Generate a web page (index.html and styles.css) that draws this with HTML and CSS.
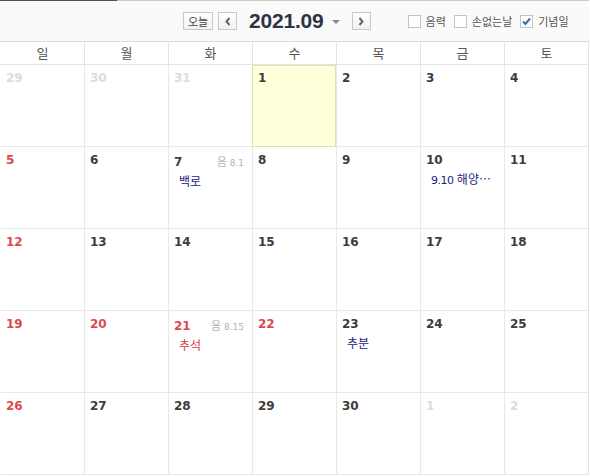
FILE: index.html
```html
<!DOCTYPE html>
<html lang="ko">
<head>
  <meta charset="UTF-8">
  <link rel="stylesheet" href="styles.css">
  <title>2021.09</title>
</head>
<body>
  <div class="calendar">
    <div class="topline"></div>
    <div class="toolbar">
      <div class="nav">
        <button class="btn btn-today">오늘</button>
        <button class="btn btn-arrow">
          <svg width="8" height="9" viewBox="0 0 8 9"><path d="M5.5 1 L2.5 4.5 L5.5 8" fill="none" stroke="#666" stroke-width="2"/></svg>
        </button>
        <div class="title">2021.09</div>
        <span class="caret"></span>
        <button class="btn btn-arrow">
          <svg width="8" height="9" viewBox="0 0 8 9"><path d="M2.5 1 L5.5 4.5 L2.5 8" fill="none" stroke="#666" stroke-width="2"/></svg>
        </button>
      </div>
      <div class="options">
        <label class="opt"><span class="box"></span>음력</label>
        <label class="opt"><span class="box"></span>손없는날</label>
        <label class="opt"><span class="box">
          <svg width="11" height="11" viewBox="0 0 11 11"><path d="M2 5.5 L4.5 8 L9 2.5" fill="none" stroke="#3b6ea8" stroke-width="2"/></svg>
        </span>기념일</label>
      </div>
    </div>

    <div class="weekdays">
      <div>일</div><div>월</div><div>화</div><div>수</div><div>목</div><div>금</div><div>토</div>
    </div>

    <div class="grid">
      <div class="cell"><div class="head"><span class="num other">29</span></div></div>
      <div class="cell"><div class="head"><span class="num other">30</span></div></div>
      <div class="cell"><div class="head"><span class="num other">31</span></div></div>
      <div class="cell today"><div class="head"><span class="num">1</span></div></div>
      <div class="cell"><div class="head"><span class="num">2</span></div></div>
      <div class="cell"><div class="head"><span class="num">3</span></div></div>
      <div class="cell"><div class="head"><span class="num">4</span></div></div>

      <div class="cell"><div class="head"><span class="num red">5</span></div></div>
      <div class="cell"><div class="head"><span class="num">6</span></div></div>
      <div class="cell">
        <div class="head"><span class="num">7</span><span class="lunar"><em>음</em> 8.1</span></div>
        <div class="event">백로</div>
      </div>
      <div class="cell"><div class="head"><span class="num">8</span></div></div>
      <div class="cell"><div class="head"><span class="num">9</span></div></div>
      <div class="cell">
        <div class="head"><span class="num">10</span></div>
        <div class="event"><span class="digits">9.10</span> 해양…</div>
      </div>
      <div class="cell"><div class="head"><span class="num">11</span></div></div>

      <div class="cell"><div class="head"><span class="num red">12</span></div></div>
      <div class="cell"><div class="head"><span class="num">13</span></div></div>
      <div class="cell"><div class="head"><span class="num">14</span></div></div>
      <div class="cell"><div class="head"><span class="num">15</span></div></div>
      <div class="cell"><div class="head"><span class="num">16</span></div></div>
      <div class="cell"><div class="head"><span class="num">17</span></div></div>
      <div class="cell"><div class="head"><span class="num">18</span></div></div>

      <div class="cell"><div class="head"><span class="num red">19</span></div></div>
      <div class="cell"><div class="head"><span class="num red">20</span></div></div>
      <div class="cell">
        <div class="head"><span class="num red">21</span><span class="lunar"><em>음</em> 8.15</span></div>
        <div class="event holiday">추석</div>
      </div>
      <div class="cell"><div class="head"><span class="num red">22</span></div></div>
      <div class="cell">
        <div class="head"><span class="num">23</span></div>
        <div class="event">추분</div>
      </div>
      <div class="cell"><div class="head"><span class="num">24</span></div></div>
      <div class="cell"><div class="head"><span class="num">25</span></div></div>

      <div class="cell"><div class="head"><span class="num red">26</span></div></div>
      <div class="cell"><div class="head"><span class="num">27</span></div></div>
      <div class="cell"><div class="head"><span class="num">28</span></div></div>
      <div class="cell"><div class="head"><span class="num">29</span></div></div>
      <div class="cell"><div class="head"><span class="num">30</span></div></div>
      <div class="cell"><div class="head"><span class="num other">1</span></div></div>
      <div class="cell"><div class="head"><span class="num other">2</span></div></div>
    </div>
  </div>
</body>
</html>
```

FILE: styles.css
```css
body {
    margin: 0;
    background: #fff;
    font-family: "Noto Sans CJK KR", "DejaVu Sans", sans-serif;
    color: #333;
}

.calendar {
    width: 589px;
}

.topline {
    height: 1px;
    background: linear-gradient(to right, #4b5057 117px, #c9c9c9 117px);
}

.toolbar {
    height: 40px;
    background: #fafafa;
    border-bottom: 1px solid #dcdcdc;
    display: flex;
    align-items: center;
}

.nav {
    display: flex;
    align-items: center;
    padding-left: 183px;
}

.btn {
    height: 18px;
    margin: 0;
    padding: 0;
    border: 1px solid #c8c8c8;
    background: linear-gradient(#fff, #f1f1f1);
    font-family: "Noto Sans CJK KR", sans-serif;
    font-size: 11px;
    line-height: 16px;
    color: #444;
    display: flex;
    align-items: center;
    justify-content: center;
}

.btn-today {
    width: 30px;
    margin-right: 5px;
}

.btn-arrow {
    width: 19px;
}

.title {
    margin-left: 12px;
    font-family: "Liberation Sans", Arial, sans-serif;
    font-weight: bold;
    font-size: 21px;
    color: #2e3346;
    letter-spacing: -0.2px;
}

.caret {
    width: 0;
    height: 0;
    margin: 1px 12px 0 8px;
    border-left: 4px solid transparent;
    border-right: 4px solid transparent;
    border-top: 4px solid #888;
}

.options {
    display: flex;
    align-items: center;
    margin-left: 37px;
}

.opt {
    display: flex;
    align-items: center;
    font-size: 11px;
    color: #555;
    margin-right: 8px;
}

.box {
    width: 11px;
    height: 11px;
    border: 1px solid #c4c4c4;
    background: #fff;
    margin-right: 5px;
    display: flex;
    align-items: center;
    justify-content: center;
}

.weekdays {
    display: grid;
    grid-template-columns: repeat(7, 84px);
    height: 22px;
    border-bottom: 1px solid #e3e3e3;
    border-right: 1px solid #e3e3e3;
}

.weekdays div {
    border-left: 1px solid #e3e3e3;
    text-align: center;
    font-size: 13px;
    line-height: 22px;
    color: #555;
}

.weekdays div:first-child,
.cell:nth-child(7n+1) {
    border-left-color: transparent;
}

.grid {
    display: grid;
    grid-template-columns: repeat(7, 84px);
    grid-auto-rows: 82px;
    border-right: 1px solid #e3e3e3;
}

.cell {
    box-sizing: border-box;
    border-left: 1px solid #e8e8e8;
    border-bottom: 1px solid #e8e8e8;
    padding: 6px 8px 0 5px;
}

.cell.today {
    background: #ffffd9;
    outline: 1px solid #e4e0b2;
    outline-offset: -1px;
}

.head {
    display: flex;
    justify-content: space-between;
    align-items: baseline;
}

.num {
    font-family: "DejaVu Sans", Verdana, sans-serif;
    font-weight: bold;
    font-size: 12px;
    line-height: 15px;
    color: #3c3c3c;
}

.num.red {
    color: #dd4a4e;
}

.num.other {
    color: #dcdcdc;
}

.lunar {
    font-family: "DejaVu Sans", sans-serif;
    font-size: 9px;
    color: #b4b4b4;
}

.lunar em {
    font-style: normal;
    font-family: "Noto Sans CJK KR", sans-serif;
    font-size: 11px;
}

.event {
    margin: 3px 0 0 5px;
    font-size: 12px;
    line-height: 15px;
    color: #1a2380;
    white-space: nowrap;
}

.event .digits {
    font-family: "DejaVu Sans", sans-serif;
    font-size: 11px;
    letter-spacing: -0.5px;
}

.event.holiday {
    color: #d33f3f;
}
```
